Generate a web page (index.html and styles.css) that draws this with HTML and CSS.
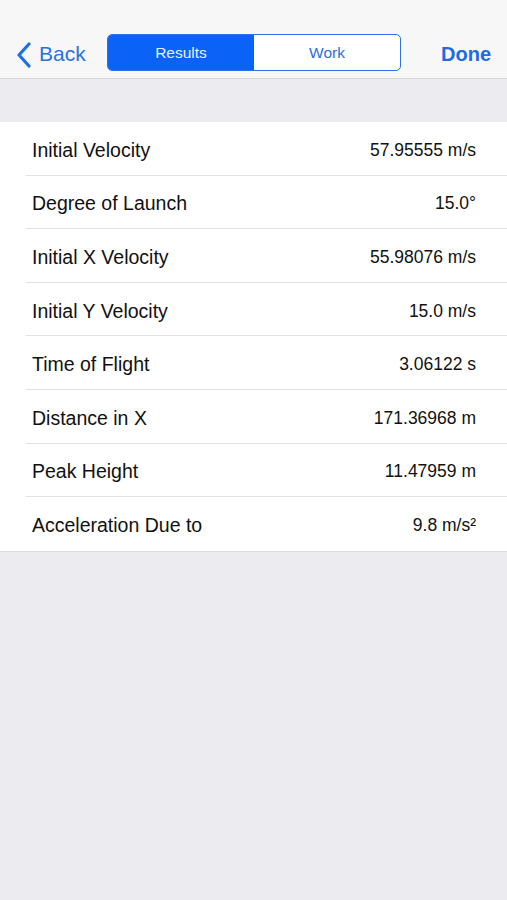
FILE: index.html
```html
<!DOCTYPE html>
<html lang="en">
<head>
  <meta charset="UTF-8">
  <meta name="viewport" content="width=device-width, initial-scale=1.0">
  <title>Results</title>
  <link rel="stylesheet" href="styles.css">
</head>
<body>
  <div class="navbar">
    <a class="nav-back">
      <svg class="chevron" width="16" height="26" viewBox="0 0 16 26">
        <polyline points="13,2 3,13 13,24" fill="none" stroke="#1f6fe8" stroke-width="3.2" stroke-linecap="round" stroke-linejoin="round"/>
      </svg>
      <span>Back</span>
    </a>
    <div class="segmented">
      <div class="seg seg-active">Results</div>
      <div class="seg">Work</div>
    </div>
    <a class="nav-done">Done</a>
  </div>

  <div class="spacer"></div>

  <!-- results table -->
  <ul class="table">
    <li class="row"><span class="label">Initial Velocity</span><span class="value">57.95555 m/s</span></li>
    <li class="row"><span class="label">Degree of Launch</span><span class="value">15.0°</span></li>
    <li class="row"><span class="label">Initial X Velocity</span><span class="value">55.98076 m/s</span></li>
    <li class="row"><span class="label">Initial Y Velocity</span><span class="value">15.0 m/s</span></li>
    <li class="row"><span class="label">Time of Flight</span><span class="value">3.06122 s</span></li>
    <li class="row"><span class="label">Distance in X</span><span class="value">171.36968 m</span></li>
    <li class="row"><span class="label">Peak Height</span><span class="value">11.47959 m</span></li>
    <li class="row"><span class="label">Acceleration Due to</span><span class="value">9.8 m/s²</span></li>
  </ul>
</body>
</html>
```

FILE: styles.css
```css
body {
  margin: 0;
  font-family: 'Liberation Sans', Arial, sans-serif;
  background: #ebebf0;
  min-height: 900px;
}
.navbar {
  height: 79px;
  background: #f7f7f7;
  border-bottom: 1px solid #d6d6d9;
  display: flex;
  align-items: flex-end;
  padding: 0 16px 8px 16px;
  box-sizing: border-box;
}
.nav-back {
  display: flex;
  align-items: center;
  gap: 7px;
  color: #2a72e2;
  font-size: 21px;
  height: 36px;
  width: 91px;
}
.chevron { margin-top: 1px; }
.segmented {
  display: flex;
  width: 294px;
  height: 37px;
  border: 1.5px solid #2a72e8;
  border-radius: 5px;
  box-sizing: border-box;
  overflow: hidden;
  background: #fff;
  margin-bottom: -1px;
}
.seg {
  flex: 1;
  display: flex;
  align-items: center;
  justify-content: center;
  font-size: 15.5px;
  color: #2a6fe0;
  padding-top: 1px;
}
.seg-active {
  background: #0a62f6;
  color: #e8f0ff;
}
.nav-done {
  margin-left: auto;
  color: #1f6be6;
  font-weight: bold;
  font-size: 20px;
  height: 36px;
  display: flex;
  align-items: center;
  margin-bottom: -2px;
}
.nav-back { margin-bottom: -2px; }
.spacer { height: 43px; }
.table {
  list-style: none;
  margin: 0;
  padding: 0 0 0 26px;
  background: #fff;
  border-bottom: 1px solid #dcdce0;
}
.row {
  height: 53.6px;
  box-sizing: border-box;
  display: flex;
  align-items: center;
  justify-content: space-between;
  padding: 4px 31px 0 6px;
  border-bottom: 1px solid #e2e2e6;
}
.row:last-child { border-bottom: none; }
.label {
  font-size: 19.5px;
  color: #111;
}
.value {
  font-size: 17.5px;
  color: #111;
}
```
